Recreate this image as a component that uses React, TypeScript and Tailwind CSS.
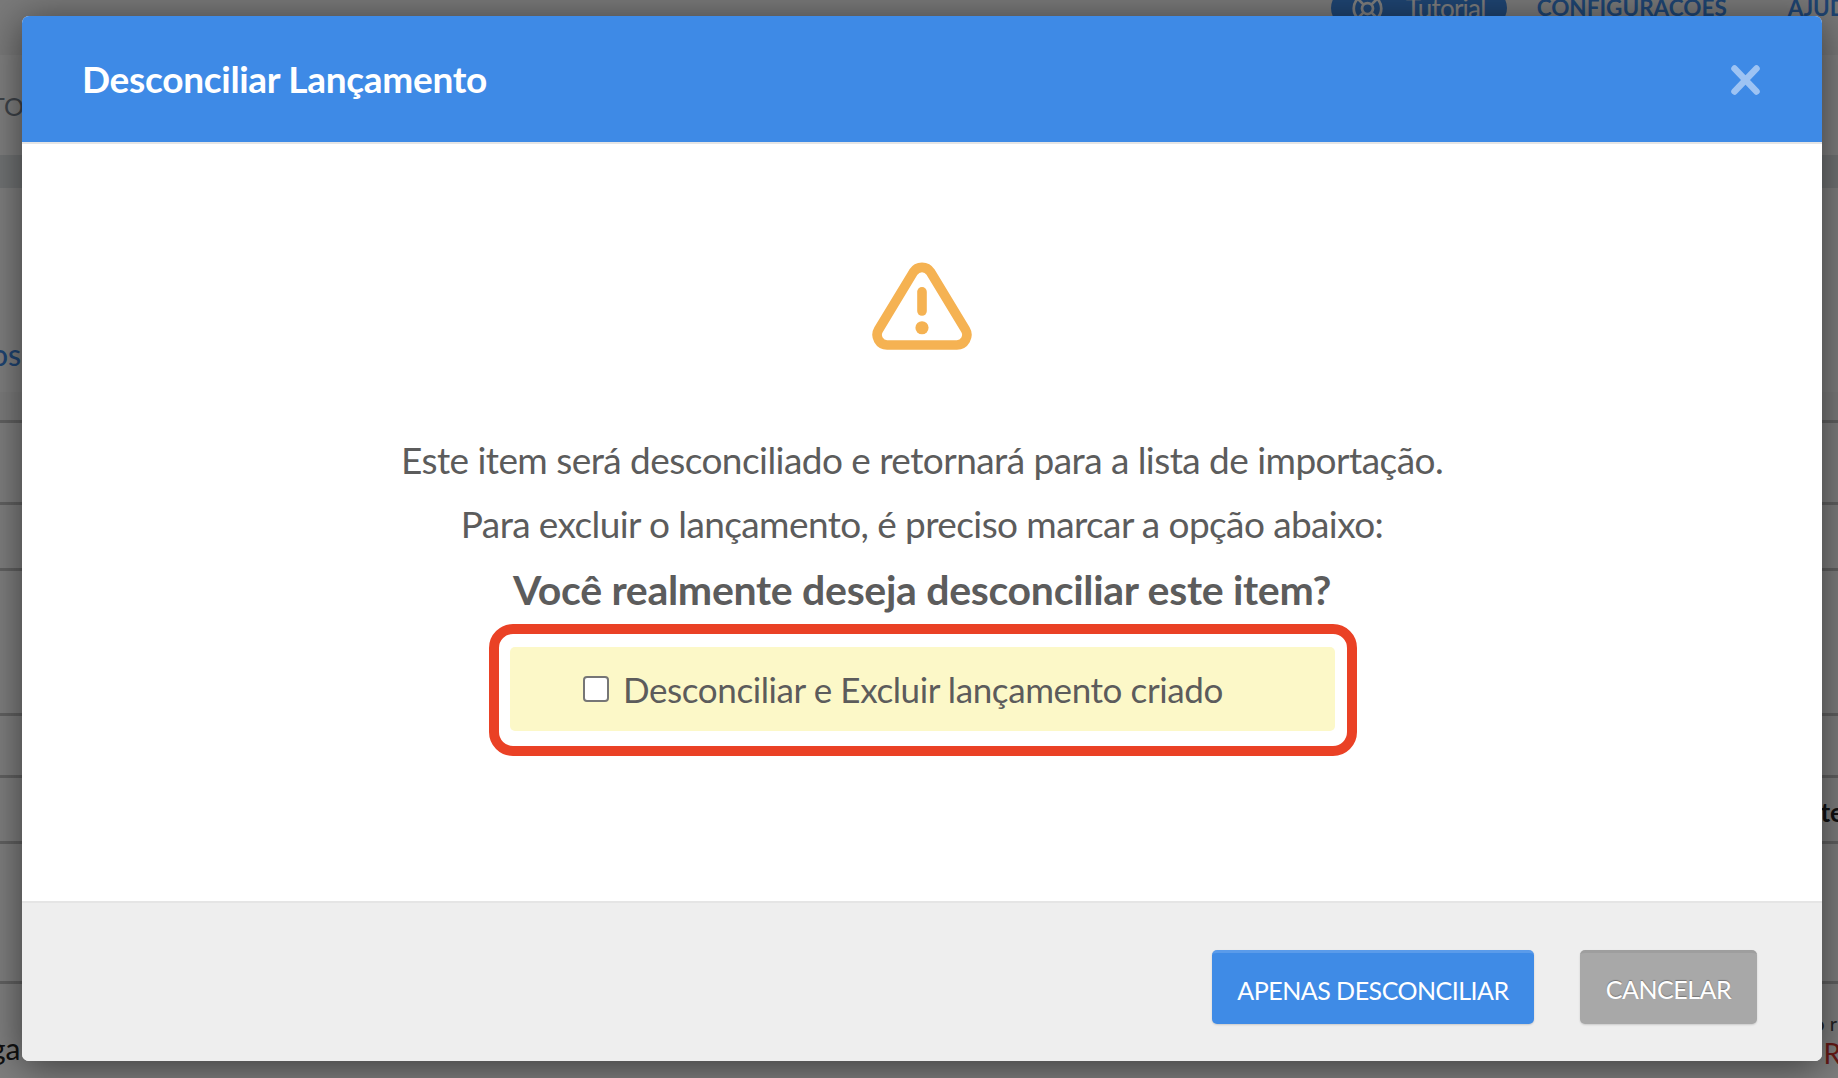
export default function App() {
  return (
    <div className="relative h-[1078px] w-[1838px] overflow-hidden bg-white font-['Lato',sans-serif]">
      {/* Page underneath the dialog */}
      <div className="flex h-full flex-col">
        <div className="flex h-[55px] items-start justify-between bg-[#f5f5f5]">
          <span />
          <div className="-mt-[11px] flex items-center text-[22.500px] text-[#3e8ae6]">
            <span className="mr-[30px] flex h-[38px] items-center rounded-full bg-[#3e8ae6] pr-[21px] pl-[20px] text-[26px] tracking-[-0.75px] text-white">
              <svg className="mr-[22px] h-[33px] w-[33px]" viewBox="0 0 24 24" fill="none" stroke="currentColor" strokeWidth="2">
                <circle cx="12" cy="12" r="10" />
                <circle cx="12" cy="12" r="4" />
                <path d="M5 5l4 4M19 5l-4 4M5 19l4-4M19 19l-4-4" />
              </svg>
              Tutorial
            </span>
            <span className="mr-[61px] font-bold">CONFIGURAÇÕES</span>
            <span className="-mr-[24px] font-bold">AJUDA</span>
          </div>
        </div>
        <div className="flex h-[100px] items-center overflow-hidden pt-[4px] text-[25px] text-[#7d8792]">
          <span className="-ml-[10px]">TO</span>
        </div>
        <div className="h-[33px] bg-[#e3e6e8]" />
        <div className="flex h-[204px] items-center overflow-hidden pt-[128px] text-[30px] font-medium text-[#3e8ae6]">
          <span className="-ml-[9px]">os</span>
        </div>
        <div className="h-[31px] border-b-[3px] border-[#c5c5c5] bg-[#f8f8f8]" />
        <div className="h-[82px] border-b-[3px] border-[#c5c5c5]" />
        <div className="h-[66px] border-b-[3px] border-[#c5c5c5]" />
        <div className="h-[145px] border-b-[3px] border-[#c5c5c5]" />
        <div className="h-[62px] border-b-[3px] border-[#c5c5c5]" />
        <div className="flex h-[66px] items-center justify-end overflow-hidden border-b-[3px] border-[#c5c5c5] pt-[6px] text-[26px] font-bold text-[#222]">
          <span className="-mr-[6px]">nte</span>
        </div>
        <div className="h-[140px] border-b-[3px] border-[#c5c5c5]" />
        <div className="flex flex-1 items-start justify-between overflow-hidden">
          <span className="-ml-[10px] mt-[42px] text-[30px] text-[#222]">ga</span>
          <span className="flex flex-col items-end pr-[1px] text-[20px] text-[#444]">
            <span className="mt-[24px]">o r</span>
            <span className="-mr-[4px] text-[28px] leading-[30px] text-[#d0342c]">R</span>
          </span>
        </div>
      </div>

      {/* Backdrop */}
      <div className="absolute inset-0 bg-black/50" />

      {/* Dialog */}
      <div className="absolute top-[16px] left-[22px] flex h-[1045px] w-[1800px] flex-col overflow-hidden rounded-[7px] bg-white text-[#5c5c5c] shadow-[0_5px_40px_rgba(0,0,0,0.55)]">
        <header className="flex h-[128px] shrink-0 items-center justify-between border-b-2 border-[#e5e5e5] bg-[#3e8ae6] pr-[62px] pl-[60px]">
          <h1 className="-mt-[1px] text-[37px] leading-none font-bold tracking-[-0.3px] text-white">Desconciliar Lançamento</h1>
          <svg className="mt-[2px] h-[30px] w-[29px]" viewBox="0 0 29 30" fill="none" stroke="#9dc3f3" strokeWidth="6.500" strokeLinecap="round">
            <path d="M3.500 3.500L25.500 26.500M25.500 3.500L3.500 26.500" />
          </svg>
        </header>

        <main className="flex flex-1 flex-col items-center pt-[118px]">
          <svg className="h-[88px] w-[102px]" viewBox="0 0 100 87" fill="none" stroke="#f5b252" strokeWidth="9.500" strokeLinecap="round" strokeLinejoin="round">
            <path d="M41.500 10a10 10 0 0 1 17 0L93 67a10 10 0 0 1 -8.500 15H15.500a10 10 0 0 1 -8.500 -15Z" />
            <path d="M50 29.500v19" />
            <circle cx="50" cy="65" r="6.500" fill="#f5b252" stroke="none" />
          </svg>
          <p className="mt-[78px] text-[37px] leading-[64px] tracking-[-0.55px]">Este item será desconciliado e retornará para a lista de importação.</p>
          <p className="text-[37px] leading-[64px] tracking-[-0.6px]">Para excluir o lançamento, é preciso marcar a opção abaixo:</p>
          <p className="text-[41px] leading-[68px] font-bold tracking-[-0.3px]">Você realmente deseja desconciliar este item?</p>
          <div className="ml-[2px] h-[132px] w-[868px] rounded-[24px] border-[10px] border-[#ea4125] pt-[13px] pr-[12px] pb-[15px] pl-[11px]">
            <label className="flex h-full items-center rounded-[5px] bg-[#fcf8c8] pl-[73px] text-[35px] tracking-[-0.4px]">
              <input type="checkbox" className="mr-[14px] h-[26px] w-[26px] appearance-none rounded-[4px] border-2 border-[#767676] bg-white" />
              Desconciliar e Excluir lançamento criado
            </label>
          </div>
        </main>

        <footer className="flex h-[160px] shrink-0 items-start justify-end gap-[46px] border-t-2 border-[#e5e5e5] bg-[#eeeeee] pt-[47px] pr-[65px]">
          <button className="flex h-[74px] w-[322px] items-center justify-center rounded-[5px] border-t-[3px] border-[#5a9bea] bg-[#3f8be6] pt-[4px] text-[25px] tracking-[-0.5px] text-white shadow-[0_1px_2px_rgba(0,0,0,0.15)]">
            APENAS DESCONCILIAR
          </button>
          <button className="flex h-[74px] w-[177px] items-center justify-center rounded-[5px] border-t-[3px] border-[#9e9e9e] bg-[#a8a8a8] pt-[2px] text-[25px] tracking-[-0.5px] text-white shadow-[0_1px_2px_rgba(0,0,0,0.15)] [text-shadow:0_-1px_1px_rgba(0,0,0,0.3)]">
            CANCELAR
          </button>
        </footer>
      </div>
    </div>
  );
}
